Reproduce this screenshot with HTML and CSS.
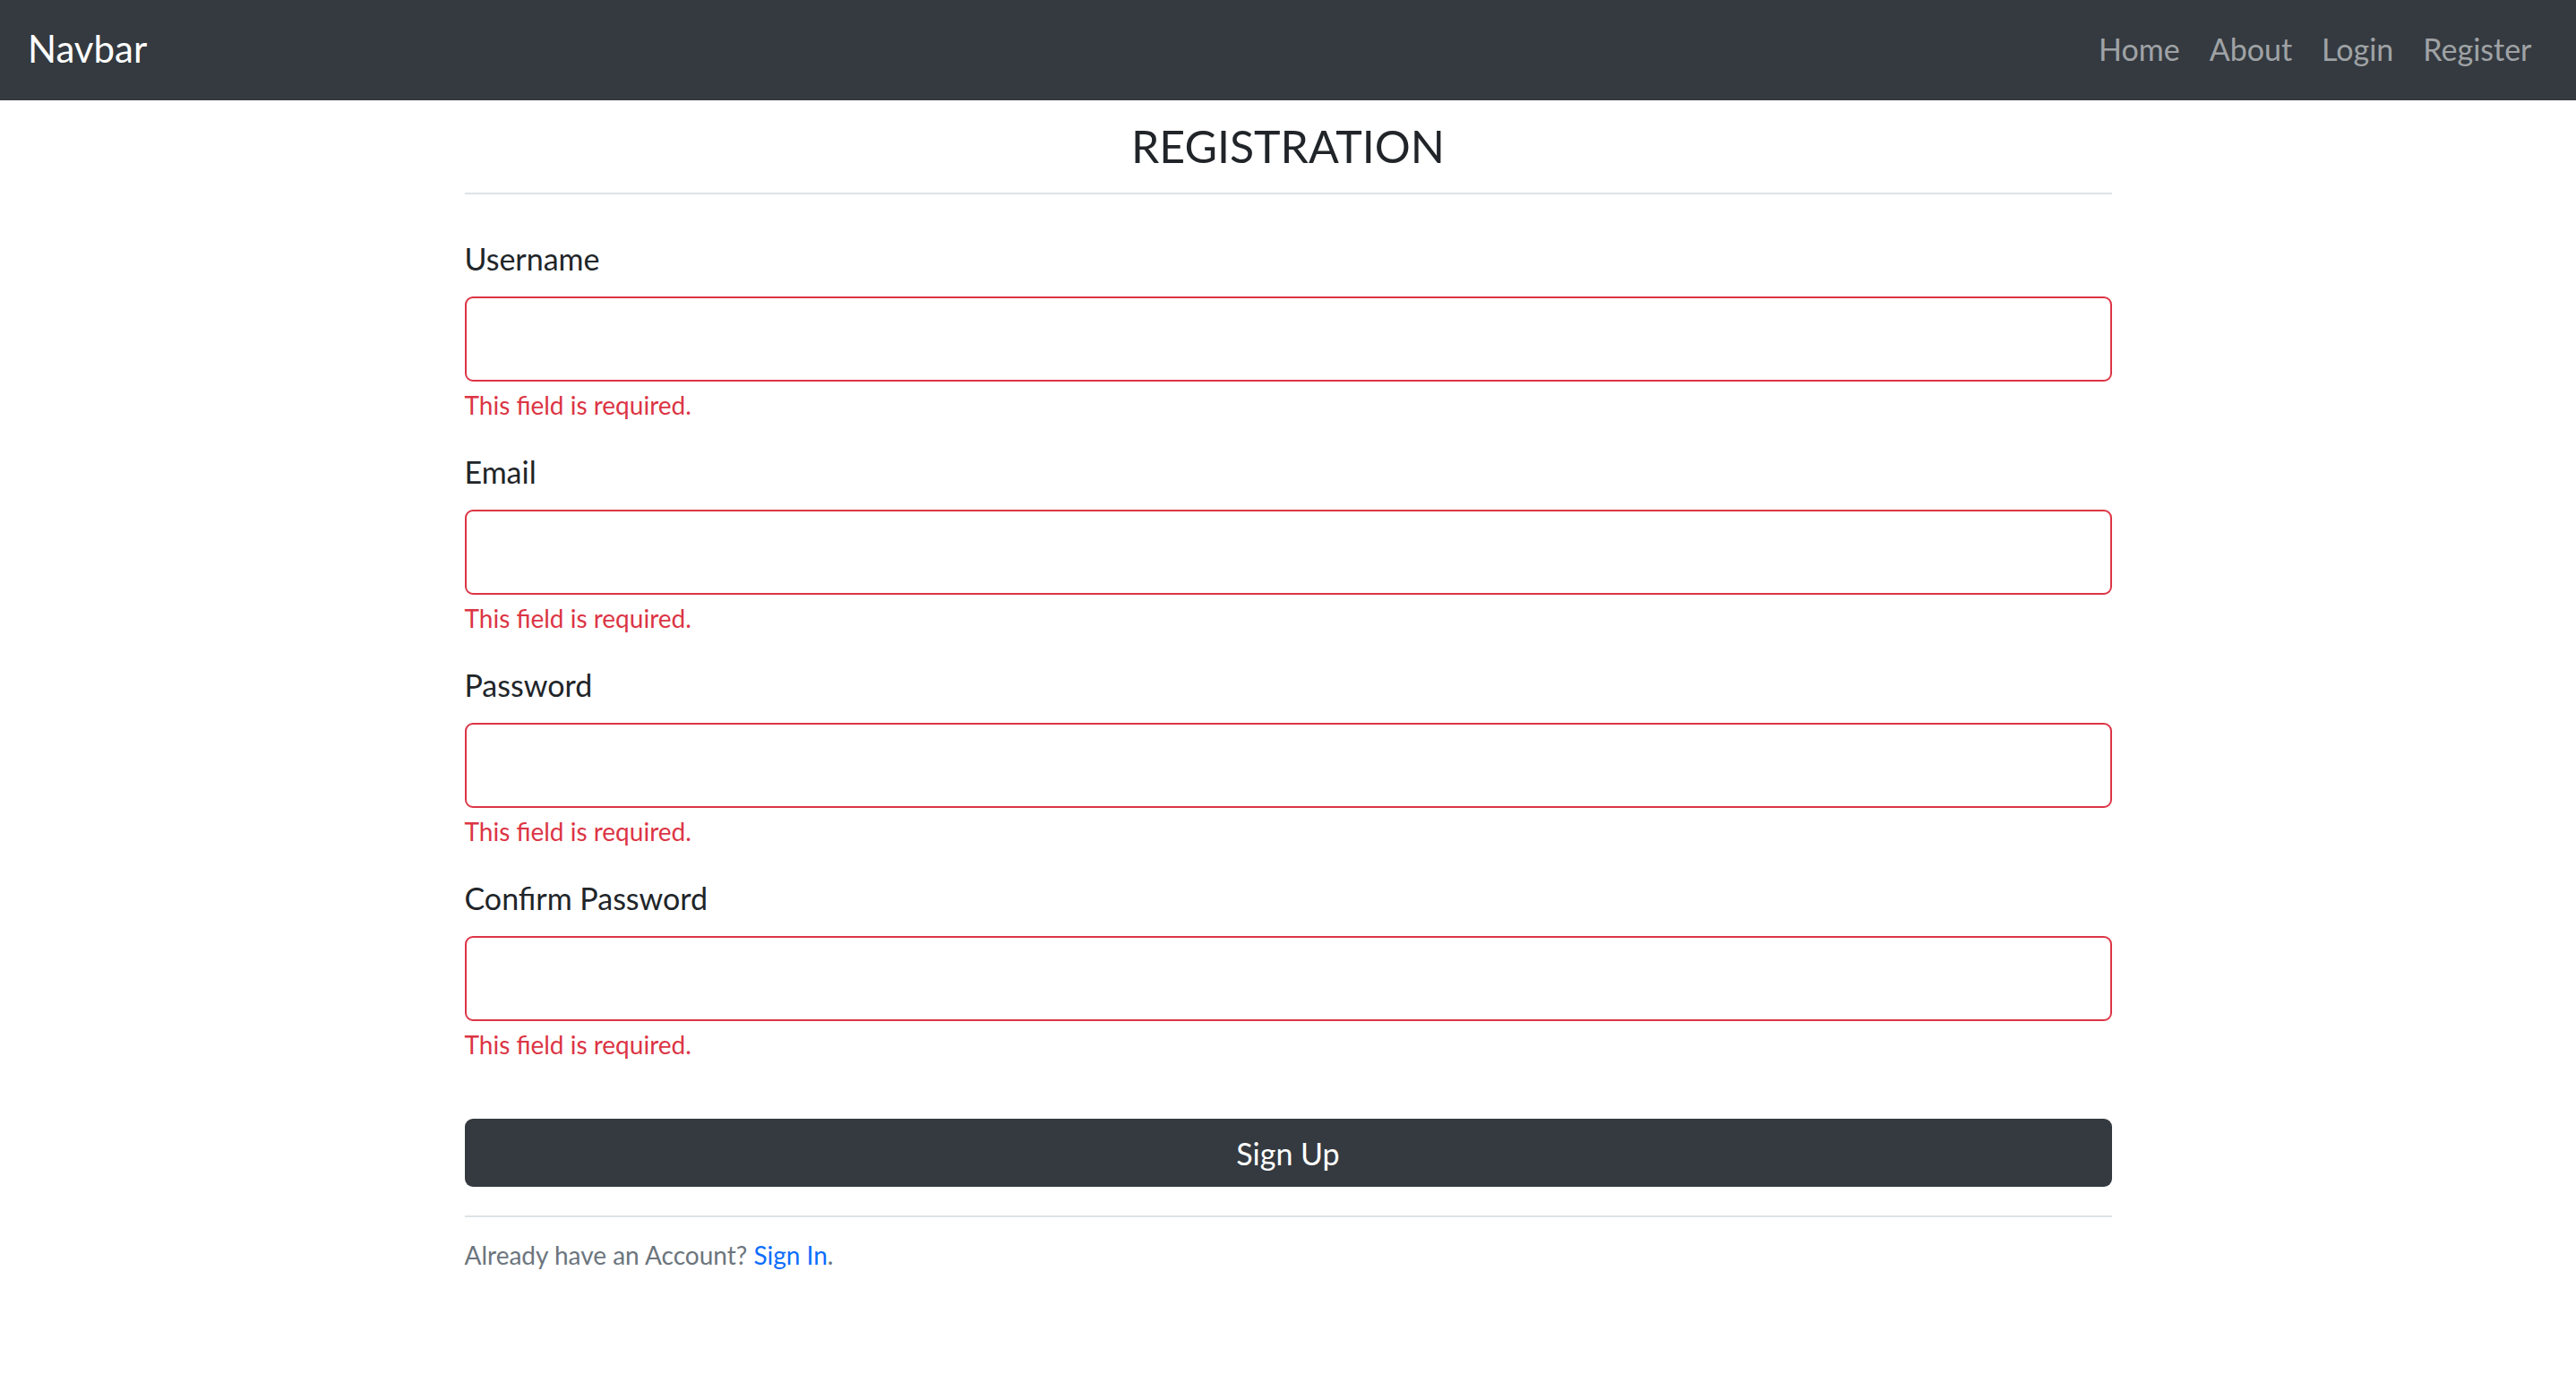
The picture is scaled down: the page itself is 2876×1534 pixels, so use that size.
FILE: index.html
```html
<!DOCTYPE html>
<html lang="en">
<head>
<meta charset="utf-8">
<title>Registration</title>
<link rel="stylesheet" href="styles.css">
</head>
<body>
<nav class="navbar">
  <a class="brand" href="#">Navbar</a>
  <ul class="nav-links">
    <li><a href="#">Home</a></li>
    <li><a href="#">About</a></li>
    <li><a href="#">Login</a></li>
    <li><a href="#">Register</a></li>
  </ul>
</nav>
<main class="content">
  <h1 class="title">REGISTRATION</h1>
  <div class="rule"></div>
  <form class="form">
    <div class="field">
      <label class="label" for="username">Username</label>
      <input class="input" id="username" type="text">
      <div class="error">This field is required.</div>
    </div>
    <div class="field">
      <label class="label" for="email">Email</label>
      <input class="input" id="email" type="email">
      <div class="error">This field is required.</div>
    </div>
    <div class="field">
      <label class="label" for="password">Password</label>
      <input class="input" id="password" type="password">
      <div class="error">This field is required.</div>
    </div>
    <div class="field">
      <label class="label" for="confirm">Confirm Password</label>
      <input class="input" id="confirm" type="password">
      <div class="error">This field is required.</div>
    </div>
    <button class="submit" type="button">Sign Up</button>
  </form>
  <div class="rule rule-bottom"></div>
  <p class="footer-text">Already have an Account? <a class="footer-link" href="#">Sign In</a>.</p>
</main>
</body>
</html>
```
FILE: styles.css
```css
* { box-sizing: border-box; }
html, body {
  margin: 0;
  padding: 0;
  background: #ffffff;
}
body {
  font-family: "Lato", "Noto Sans", "DejaVu Sans", sans-serif;
  color: #212529;
  font-size: 34px;
  line-height: 1.5;
}
.navbar {
  height: 112px;
  background: #343a40;
  display: flex;
  align-items: center;
  justify-content: space-between;
  padding: 0 33px 0 31px;
}
.brand {
  color: #ffffff;
  font-size: 42px;
  line-height: 1.2;
  text-decoration: none;
  margin-bottom: 4px;
}
.nav-links {
  list-style: none;
  margin: 0;
  padding: 0;
  display: flex;
  margin-bottom: 2px;
}
.nav-links a {
  display: block;
  padding: 0 16.5px;
  color: rgba(255, 255, 255, 0.55);
  text-decoration: none;
  font-size: 34px;
  line-height: 1.2;
}
.content {
  width: 1839px;
  margin: 0 auto;
}
.title {
  margin: 21px 0 0;
  font-size: 50px;
  font-weight: 400;
  line-height: 1.2;
  text-align: center;
}
.rule {
  height: 2px;
  background: #dee2e6;
  margin-top: 22px;
}
.form {
  display: flex;
  flex-direction: column;
  padding-top: 46px;
}
.field {
  display: flex;
  flex-direction: column;
  margin-bottom: 28px;
}
.label {
  font-size: 34px;
  line-height: 51px;
  margin-bottom: 17px;
}
.input {
  height: 95px;
  border: 2px solid #dc3545;
  border-radius: 9px;
  font: inherit;
  padding: 0 24px;
  background: #ffffff;
  outline: none;
}
.error {
  margin-top: 5px;
  color: #dc3545;
  font-size: 28px;
  line-height: 42px;
}
.submit {
  margin-top: 34px;
  height: 76px;
  background: #343a40;
  color: #ffffff;
  border: none;
  border-radius: 9px;
  font-family: inherit;
  font-size: 34px;
  line-height: 51px;
  padding: 0;
}
.rule-bottom {
  margin-top: 32px;
}
.footer-text {
  margin: 21px 0 0;
  font-size: 28px;
  line-height: 42px;
  color: #6c757d;
}
.footer-link {
  color: #0d6efd;
  text-decoration: none;
}
```
